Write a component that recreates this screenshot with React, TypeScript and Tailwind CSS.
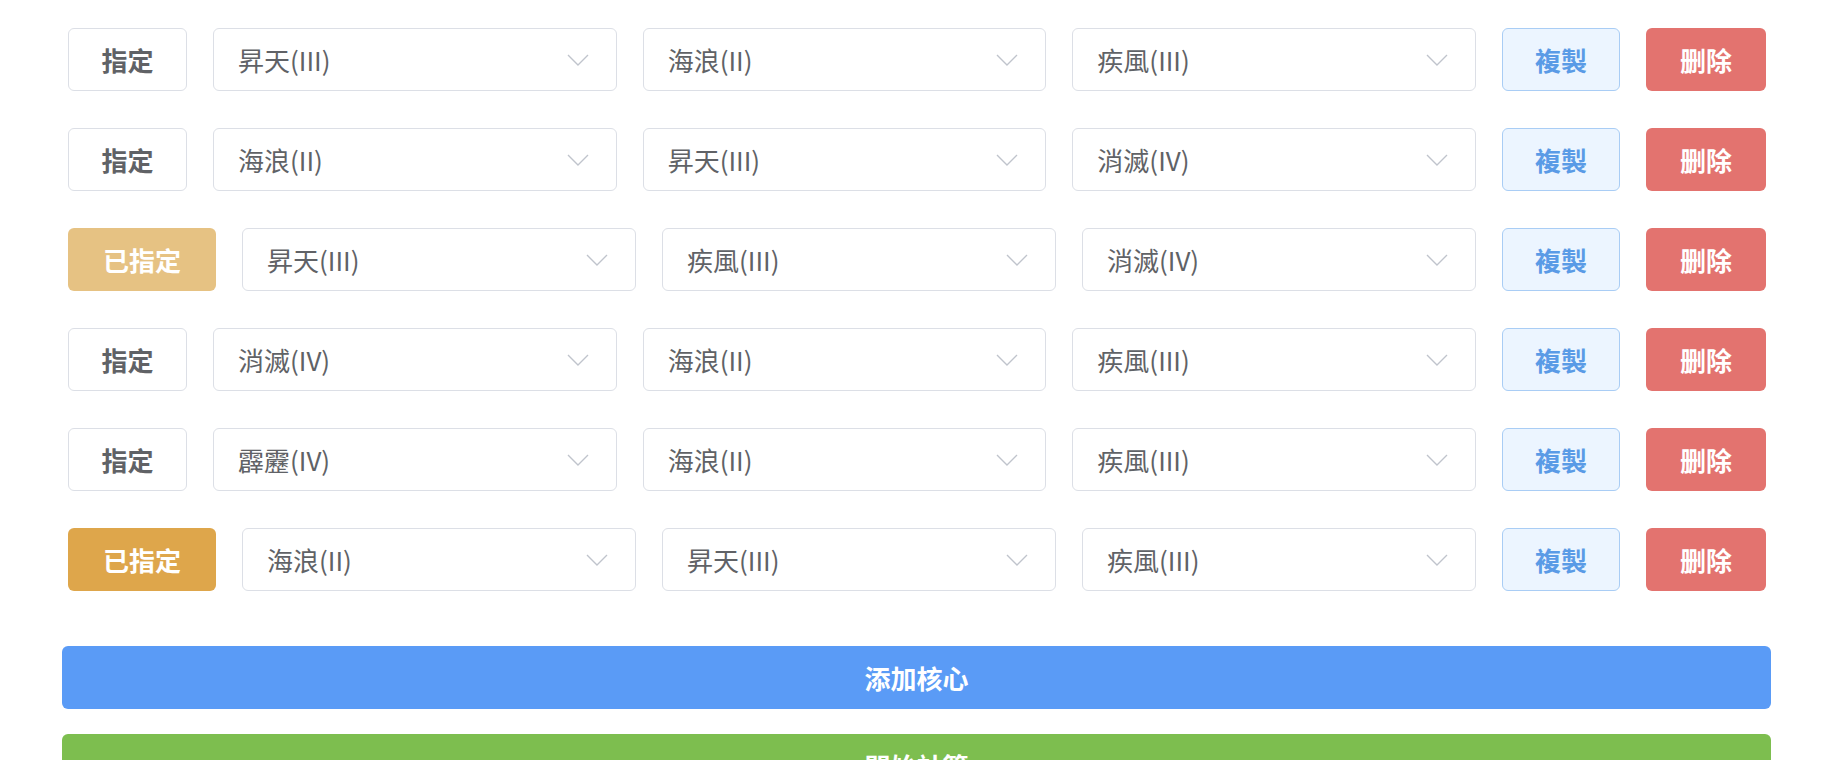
import React from "react";

type Row = { assigned: 0 | 1 | 2; picks: [string, string, string] };

const rows: Row[] = [
  { assigned: 0, picks: ["昇天(III)", "海浪(II)", "疾風(III)"] },
  { assigned: 0, picks: ["海浪(II)", "昇天(III)", "消滅(IV)"] },
  { assigned: 1, picks: ["昇天(III)", "疾風(III)", "消滅(IV)"] },
  { assigned: 0, picks: ["消滅(IV)", "海浪(II)", "疾風(III)"] },
  { assigned: 0, picks: ["霹靂(IV)", "海浪(II)", "疾風(III)"] },
  { assigned: 2, picks: ["海浪(II)", "昇天(III)", "疾風(III)"] },
];

const font = { fontFamily: '"Noto Sans CJK TC", "Noto Sans CJK SC", "Noto Sans", sans-serif' };

function Chevron() {
  return (
    <svg width="22" height="12" viewBox="0 0 22 12" fill="none" className="shrink-0">
      <path d="M1 1 L11 11 L21 1" stroke="#c0c4cc" strokeWidth="1.4" />
    </svg>
  );
}

function SelectBox({ value }: { value: string }) {
  return (
    <div className="flex-1 h-[63px] flex items-center justify-between pl-[24px] pr-[27px] border border-[#dcdfe6] rounded-[6px] bg-white">
      <span className="text-[26px] text-[#606266] leading-none">{value}</span>
      <Chevron />
    </div>
  );
}

function AssignButton({ state }: { state: 0 | 1 | 2 }) {
  if (state === 0) {
    return (
      <div className="w-[119px] h-[63px] shrink-0 flex items-center justify-center border border-[#dcdfe6] rounded-[6px] bg-white text-[26px] font-bold text-[#606266]">
        指定
      </div>
    );
  }
  return (
    <div
      className={
        state === 1
          ? "w-[148px] h-[63px] shrink-0 flex items-center justify-center rounded-[6px] bg-[#e6c283] text-[26px] font-bold text-white"
          : "w-[148px] h-[63px] shrink-0 flex items-center justify-center rounded-[6px] bg-[#dea64b] text-[26px] font-bold text-white"
      }
    >
      已指定
    </div>
  );
}

export default function App() {
  return (
    <div className="w-[1826px] h-[760px] overflow-hidden bg-white pl-[62px] pr-[55px] pt-[28px]" style={font}>
      <div className="flex flex-col gap-[37px] pl-[6px] pr-[5px]">
        {rows.map((r, i) => (
          <div key={i} className="flex items-center gap-[26px]">
            <AssignButton state={r.assigned} />
            <SelectBox value={r.picks[0]} />
            <SelectBox value={r.picks[1]} />
            <SelectBox value={r.picks[2]} />
            <div className="w-[118px] h-[63px] shrink-0 flex items-center justify-center border border-[#a9cdf5] rounded-[6px] bg-[#ecf5ff] text-[26px] font-bold text-[#5a9be6]">
              複製
            </div>
            <div className="w-[120px] h-[63px] shrink-0 flex items-center justify-center rounded-[6px] bg-[#e3736f] text-[26px] font-bold text-white">
              删除
            </div>
          </div>
        ))}
      </div>
      <div className="mt-[55px] h-[63px] flex items-center justify-center rounded-[6px] bg-[#5a9bf6] text-[26px] font-bold text-white">
        添加核心
      </div>
      <div className="mt-[25px] h-[63px] flex items-center justify-center rounded-[6px] bg-[#7dbe4f] text-[26px] font-bold text-white">
        開始計算
      </div>
    </div>
  );
}
